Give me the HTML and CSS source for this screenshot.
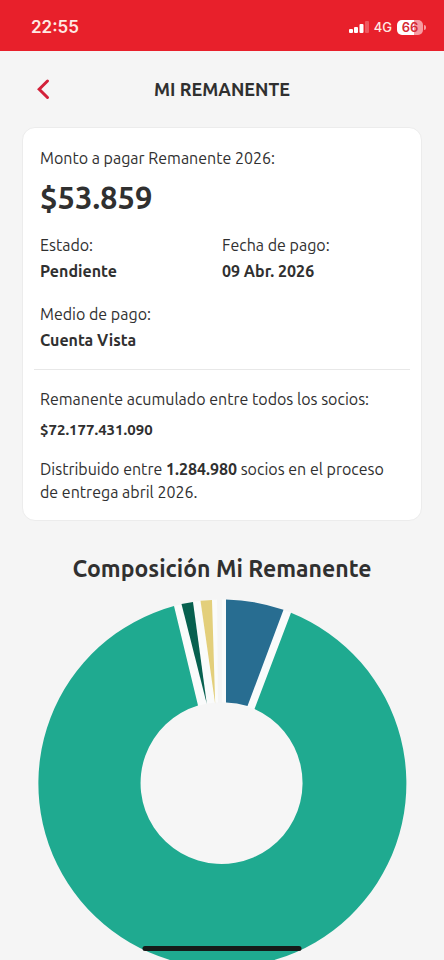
FILE: index.html
```html
<!DOCTYPE html>
<html lang="es">
<head>
<meta charset="utf-8">
<meta name="viewport" content="width=device-width, initial-scale=1">
<title>Mi Remanente</title>
<link rel="stylesheet" href="styles.css">
</head>
<body>
<div class="app">
  <div class="status">
    <span class="time">22:55</span>
    <div class="indicators">
      <svg class="signal" width="20" height="12" viewBox="0 0 20 12" fill="#fff" aria-hidden="true">
        <rect x="0" y="8" width="4" height="4" rx="1"/>
        <rect x="5" y="6" width="4" height="6" rx="1"/>
        <rect x="10.500" y="3" width="4" height="9" rx="1"/>
        <rect x="16" y="0" width="4" height="12" rx="1" opacity=".25"/>
      </svg>
      <span class="network">4G</span>
      <span class="battery">66</span>
    </div>
  </div>
  <header class="header">
    <button class="back" type="button" aria-label="Volver">
      <svg width="14" height="22" viewBox="0 0 14 22" fill="none" stroke="#d3213a" stroke-width="3" stroke-linecap="round" stroke-linejoin="miter" aria-hidden="true"><path d="M11.500 3 3.200 11.200 11.500 19.500"/></svg>
    </button>
    <h1 class="title">MI REMANENTE</h1>
  </header>
  <main class="content">
    <section class="card">
      <div class="summary">
        <p class="text">Monto a pagar Remanente 2026:</p>
        <p class="amount">$53.859</p>
        <dl class="details">
          <div><dt>Estado:</dt><dd>Pendiente</dd></div>
          <div><dt>Fecha de pago:</dt><dd>09 Abr. 2026</dd></div>
          <div><dt>Medio de pago:</dt><dd>Cuenta Vista</dd></div>
        </dl>
      </div>
      <hr class="divider">
      <div class="total">
        <p class="text">Remanente acumulado entre todos los socios:</p>
        <p class="total-amount">$72.177.431.090</p>
        <p class="text">Distribuido entre <strong>1.284.980</strong> socios en el proceso de entrega abril 2026.</p>
      </div>
    </section>
    <h2 class="chart-title">Composición Mi Remanente</h2>
    <svg class="chart" viewBox="0 590 444 386" role="img" aria-label="Composición Mi Remanente">
      <circle cx="222" cy="783.500" r="82" fill="#f6f6f6"/>
      <path fill="#fafbfb" d="M174 606Q198 599 226 599.500Q260 600 291 613L255 710Q226 697 198 706Z"/>
      <path fill="#f5f5f5" d="M217 599H222V703H218Z"/>
      <path fill="#1faa90" d="M291 612.800A184 184 0 1 1 174 606L198 705.500A81 81 0 1 0 254.500 709Z"/>
      <path fill="#286d91" d="M226 599.500A184 184 0 0 1 283.500 609.800L247.500 706A81 81 0 0 0 226 702.500Z"/>
      <path fill="#07604f" d="M181.500 604 193 602 206.800 704Z"/>
      <path fill="#e3cf7b" d="M200.500 600.700 212 600 215.200 704Z"/>
    </svg>
  </main>
  <div class="home-indicator"></div>
</div>
</body>
</html>
```
FILE: styles.css
```css
* { box-sizing: border-box; }

body {
  margin: 0;
  background: #f5f5f5;
  color: #303030;
  font-family: Ubuntu, "Noto Sans", sans-serif;
  font-size: 16px;
  line-height: 24px;
}

h1, h2, p, dl, dd { margin: 0; }

.app {
  display: flex;
  flex-direction: column;
  height: 100vh;
}

.status {
  display: flex;
  flex: none;
  align-items: center;
  justify-content: space-between;
  height: 51px;
  padding: 3px 18px 0 31px;
  background: #e8202b;
  color: #fff;
  font-family: Inter, sans-serif;
}

.time { font-size: 17px; font-weight: 600; color: #ffe9e4; }

.indicators { display: flex; align-items: center; gap: 5px; }

.network { font-size: 13px; font-weight: 500; color: #ffe9e4; }

.battery {
  position: relative;
  width: 26px;
  height: 15px;
  margin-right: 3px;
  border-radius: 5px;
  background: linear-gradient(90deg, #fff 66%, #f79aa0 66%);
  color: #d52b35;
  font-size: 13px;
  font-weight: 600;
  line-height: 15px;
  text-align: center;
}

.battery::after {
  content: "";
  position: absolute;
  top: 5px;
  right: -3px;
  width: 2px;
  height: 5px;
  border-radius: 0 2px 2px 0;
  background: #f79aa0;
}

.header {
  display: grid;
  flex: none;
  grid-template-columns: 40px 1fr 40px;
  align-items: center;
  height: 76px;
  padding: 0 23px;
}

.back {
  display: flex;
  align-items: center;
  justify-content: center;
  height: 40px;
  padding: 0;
  border: 0;
  background: none;
}

.title {
  font-size: 18px;
  font-weight: 700;
  text-align: center;
}

.content {
  flex: 1;
  min-height: 0;
  overflow: hidden auto;
  scrollbar-width: none;
}

.card {
  margin: 0 22px;
  padding: 19px 11px 16px;
  border: 1px solid #ececec;
  border-radius: 13px;
  background: #fff;
}

.summary, .total { padding: 0 6px; }

.text { line-height: 23px; }

.amount {
  margin-top: 8px;
  font-size: 31px;
  font-weight: 700;
  line-height: 40px;
}

.details {
  display: grid;
  grid-template-columns: 1fr 1fr;
  row-gap: 18px;
  margin-top: 15px;
}

dt { line-height: 25px; }

dd { line-height: 26px; }

dd, strong { font-weight: 700; }

.divider {
  height: 1px;
  margin: 16px 0 18px;
  border: 0;
  background: #e8e8e8;
}

.total-amount {
  margin: 7px 0 16px;
  font-size: 15px;
  font-weight: 700;
}

.chart-title {
  margin-top: 32px;
  font-size: 23px;
  font-weight: 700;
  line-height: 32px;
  text-align: center;
}

.chart { display: block; width: 100%; margin-top: 5px; }

.home-indicator {
  position: fixed;
  bottom: 9px;
  left: 50%;
  width: 159px;
  height: 5px;
  border-radius: 3px;
  background: #151b19;
  transform: translateX(-50%);
}
```
